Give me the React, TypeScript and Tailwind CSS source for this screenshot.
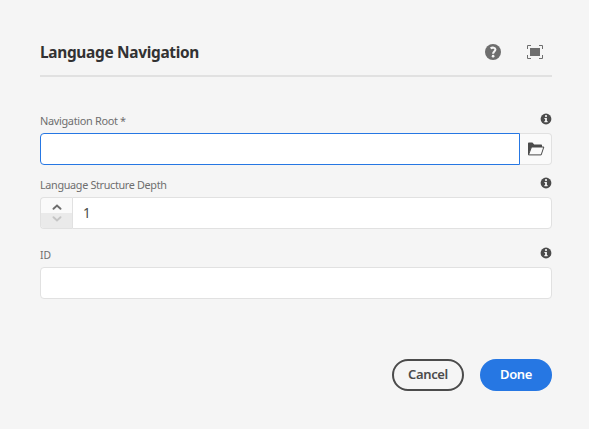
import type { ReactNode } from 'react';

function InfoIcon() {
  return (
    <svg width="12" height="12" viewBox="0 0 12 12" className="mt-1 block" aria-label="Info">
      <circle cx="6" cy="6" r="5.4" fill="#4b4b4b" />
      <circle cx="6" cy="3.1" r="1.1" fill="#f5f5f5" />
      <path d="M4.4 5H6.9V8.1H7.6V9.2H4.4V8.1H5.1V6H4.4Z" fill="#f5f5f5" />
    </svg>
  );
}

function HelpIcon() {
  return (
    <svg width="16" height="16" viewBox="0 0 16 16" aria-label="Help">
      <circle cx="8" cy="8" r="8" fill="#6e6e6e" />
      <path d="M5.6 4.4C7.4 3.1 10.4 3.4 10.4 5.6C10.4 7.5 8.1 7.6 8.1 9.7" fill="none" stroke="#f5f5f5" strokeWidth="2.1" />
      <circle cx="8.1" cy="12.2" r="1.35" fill="#f5f5f5" />
    </svg>
  );
}

function FullscreenIcon() {
  return (
    <svg width="16" height="14" viewBox="0 0 16 14" aria-label="Toggle fullscreen">
      <rect x="3" y="3" width="10" height="8" fill="#6e6e6e" />
      <path d="M.5 4V.5H4M12 .5H15.5V4M15.5 10V13.5H12M4 13.5H.5V10" fill="none" stroke="#6e6e6e" />
    </svg>
  );
}

function FolderIcon() {
  return (
    <svg width="18" height="14" viewBox="0 0 18 14" aria-label="Browse">
      <path d="M1 12.9V1.4C1 .9 1.3.6 1.8.6H5.4L7.2 2.5H14.3C14.8 2.5 15 2.8 15 3.2V5H4.4L1.6 12.9Z" fill="#4b4b4b" />
      <path d="M4.5 5H16.8L14.2 12.9H1.5Z" fill="#fafafa" stroke="#4b4b4b" strokeLinejoin="round" />
    </svg>
  );
}

function Field({ label, children }: { label: ReactNode; children: ReactNode }) {
  return (
    <div>
      <div className="flex h-6 items-start justify-between text-[11.5px] leading-6 text-[#6e6e6e]">
        {label}
        <InfoIcon />
      </div>
      <div className="flex h-8">{children}</div>
    </div>
  );
}

export default function App() {
  return (
    <main className="h-[429px] w-[589px] bg-[#f5f5f5] pt-8 pr-[37px] pl-10 font-['Noto_Sans',sans-serif]">
      <header className="flex h-[45px] items-start justify-between border-b-2 border-[#e1e1e1]">
        <h1 className="origin-left scale-x-[0.935] text-[16.5px] leading-10 font-bold tracking-[-0.34px] text-[#323232]">Language Navigation</h1>
        <div className="flex h-10 items-center gap-[26px] pr-[9px]">
          <HelpIcon />
          <FullscreenIcon />
        </div>
      </header>
      <div className="mt-8 flex flex-col gap-2">
        <Field label={<span className="origin-left scale-x-[0.95] tracking-[-0.35px]">Navigation Root *</span>}>
          <input aria-label="Navigation Root" className="w-[480px] rounded-l-[4px] border border-[#2677e3] bg-white px-3 outline-none" />
          <button aria-label="Browse" className="flex w-8 items-center justify-center rounded-r-[4px] border border-l-0 border-[#e1e1e1] bg-[#fafafa]">
            <FolderIcon />
          </button>
        </Field>
        <Field label={<span className="origin-left scale-x-[0.94] tracking-[-0.35px]">Language Structure Depth</span>}>
          <div className="flex w-8 flex-col overflow-hidden rounded-l-[4px] border border-r-0 border-[#e1e1e1] bg-[#fafafa]">
            <button aria-label="Increase" className="flex h-[15px] items-center justify-center pt-[3px]">
              <svg width="10" height="6" viewBox="0 0 10 6"><path d="M1.5 4.8L5 1.5L8.5 4.8" fill="none" stroke="#6e6e6e" strokeWidth="1.9" strokeLinecap="round" /></svg>
            </button>
            <button aria-label="Decrease" className="flex h-[15px] items-center justify-center bg-[#eaeaea] pb-[3px]">
              <svg width="10" height="6" viewBox="0 0 10 6"><path d="M1.5 1.2L5 4.5L8.5 1.2" fill="none" stroke="#c5c5c5" strokeWidth="1.9" strokeLinecap="round" /></svg>
            </button>
          </div>
          <div className="flex-1 rounded-r-[4px] border border-[#e1e1e1] bg-white pl-[10px] text-[13.5px] leading-[30px] text-[#4b4b4b]">1</div>
        </Field>
        <div className="mt-1.5">
          <Field label={<span className="origin-left scale-x-[0.9]">ID</span>}>
            <input aria-label="ID" className="flex-1 rounded-[4px] border border-[#e1e1e1] bg-white px-3 outline-none" />
          </Field>
        </div>
      </div>
      <footer className="mt-[60px] flex justify-end gap-4 text-[13px] font-semibold">
        <button className="h-8 w-[72px] rounded-full border-2 border-[#4b4b4b] pb-0.5 leading-[25px] tracking-[-0.35px] text-[#4b4b4b]">Cancel</button>
        <button className="h-8 w-[72px] rounded-full bg-[#2677e3] pb-0.5 leading-[29px] tracking-[-0.4px] text-white">Done</button>
      </footer>
    </main>
  );
}
